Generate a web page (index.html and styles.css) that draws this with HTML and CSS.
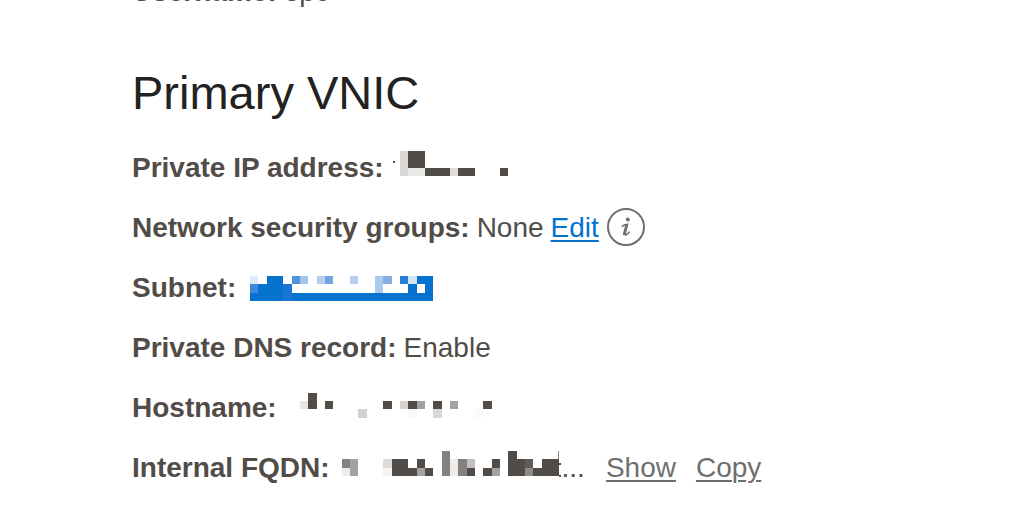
FILE: index.html
```html
<!DOCTYPE html>
<html lang="en">

<head>
  <meta charset="UTF-8">
  <title>Instance Details</title>
  <link rel="stylesheet" href="styles.css">
</head>

<body>
  <main class="details">
    <div class="row"><strong>Username:</strong> <span>opc</span></div>

    <h1>Primary VNIC</h1>

    <div class="row">
      <strong>Private IP address:</strong>
      <svg class="redacted" width="120" height="60" viewBox="391 138 120 60" aria-hidden="true">
        <path class="ink" d="M393 161h2v2h-2zM408 151h17v17h-17zM425 168h25v8h-25zM458 168h17v8h-17zM500 168h8v8h-8z" />
        <path fill="#d8d8d8" d="M400 151h8v25h-8z" />
        <path fill="#e9e9e8" d="M408 168h17v8h-17z" />
        <path fill="#dededd" d="M450 168h8v8h-8z" />
      </svg>
    </div>

    <div class="row">
      <strong>Network security groups:</strong>
      <span>None</span>
      <a href="#">Edit</a>
      <button class="info" type="button" aria-label="Information">
        <svg width="40" height="40" viewBox="0 0 40 40">
          <circle cx="20" cy="19" r="18" fill="none" stroke="#6f6f6f" stroke-width="2" />
          <circle cx="21.8" cy="11.6" r="2" fill="#6f6f6f" />
          <path d="M15.8 18.6Q18.4 16.4 21.4 16.2L18.9 24.6Q18.2 27.4 20.2 26.7Q22 26 23.6 23.6" fill="none" stroke="#6f6f6f" stroke-width="1.6" />
          <path d="M19.4 16.8L22.4 15.8L19.8 26.6L17.4 27.2Q16.6 26.4 17.2 24.4z" fill="#6f6f6f" />
        </svg>
      </button>
    </div>

    <div class="row">
      <strong>Subnet:</strong>
      <a href="#" aria-label="Subnet">
        <svg class="redacted" width="192" height="60" viewBox="243 258 192 60">
          <path fill="#0572ce" d="M267 276h16v17h-16zM417 276h16v8h-16zM258 284h25v9h-25zM408 284h9v9h-9zM425 284h8v9h-8zM250 293h183v8h-183z" />
          <path fill="#1a74d3" d="M283 284h9v17h-9z" />
          <path fill="#3f8ad8" d="M250 284h8v9h-8z" />
          <path fill="#dfebf8" d="M250 276h8v8h-8z" />
          <path fill="#5094dc" d="M292 276h8v8h-8z" />
          <path fill="#a2c5ec" d="M300 276h8v8h-8z" />
          <path fill="#b5cff0" d="M317 276h8v8h-8zM350 276h8v8h-8z" />
          <path fill="#72a5e3" d="M325 276h8v8h-8z" />
          <path fill="#abcaee" d="M375 276h8v17h-8z" />
          <path fill="#85b0e6" d="M383 276h9v8h-9z" />
          <path fill="#2a7fd6" d="M400 276h8v8h-8z" />
          <path fill="#d3e4f6" d="M408 276h9v8h-9z" />
        </svg>
      </a>
    </div>

    <div class="row"><strong>Private DNS record:</strong> <span>Enable</span></div>

    <div class="row">
      <strong>Hostname:</strong>
      <svg class="redacted" width="210" height="60" viewBox="284 378 210 60" aria-hidden="true">
        <path class="ink" d="M308 393h9v16h-9zM325 401h8v8h-8zM383 401h9v8h-9zM408 401h9v8h-9zM433 401h9v8h-9zM483 401h9v8h-9z" />
        <path fill="#e6e6e6" d="M300 401h8v8h-8z" />
        <path fill="#d2d2d2" d="M358 409h9v9h-9zM400 401h8v8h-8z" />
        <path fill="#a3a2a1" d="M417 401h8v8h-8zM450 401h8v8h-8z" />
        <path fill="#dad8d6" d="M433 409h9v9h-9z" />
        <path fill="#fafafa" d="M408 409h9v9h-9zM475 409h8v9h-8z" />
      </svg>
    </div>

    <div class="row">
      <strong>Internal FQDN:</strong>
      <span class="fqdn">
        <svg class="redacted" width="225" height="60" viewBox="337 438 225 60" aria-hidden="true">
          <path class="ink" d="M392 459h16v9h9v8h-25zM417 459h8v9h-8zM425 468h8v8h-8zM467 468h8v8h-8zM492 459h8v9h-8zM483 468h9v8h-9zM508 451h9v8h8v17h-17zM542 459h17v17h-26v-8h9zM559 463h2v2h-2zM559 475h2v2h-2z" />
          <path fill="#86807c" d="M342 459h8v9h-8zM442 451h8v25h-8zM458 459h9v17h-9z" />
          <path fill="#a3a2a1" d="M350 459h8v17h-8zM417 468h8v8h-8zM492 468h8v8h-8z" />
          <path fill="#ececec" d="M342 468h8v8h-8zM450 459h8v17h-8z" />
          <path fill="#dcdcdb" d="M383 459h9v9h-9z" />
          <path fill="#f3f3f3" d="M383 468h9v8h-9z" />
          <path fill="#bfbfbf" d="M467 459h8v9h-8z" />
          <path fill="#625b57" d="M525 459h8v9h-8z" />
          <path fill="#8e8c88" d="M525 468h8v8h-8zM558 451h1v8h-1z" />
        </svg>
        <span>...</span>
      </span>
      <div class="actions">
        <a href="#">Show</a>
        <a href="#">Copy</a>
      </div>
    </div>
  </main>
</body>

</html>
```

FILE: styles.css
```css
body {
  margin: 0;
  font-family: "Liberation Sans", Arial, sans-serif;
  font-size: 28px;
  color: #514c47;
  background-color: #fff;
  overflow: hidden;
}

.details {
  margin-top: -38px;
  padding: 0 132px;
}

h1 {
  margin: 41px 0 15px;
  font-size: 47px;
  font-weight: normal;
  line-height: 60px;
  color: #222;
}

.row {
  display: flex;
  align-items: center;
  gap: 7px;
  height: 60px;
  line-height: 60px;
  white-space: nowrap;
}

a {
  color: #0572ce;
  text-decoration: underline;
  text-decoration-thickness: 2px;
  text-underline-offset: 3px;
}

.redacted {
  display: block;
  flex: none;
}

.ink {
  fill: #514c47;
}

.info {
  display: flex;
  padding: 0;
  border: none;
  background: none;
  cursor: pointer;
}

.fqdn {
  display: flex;
}

.actions {
  display: flex;
  gap: 20px;
  margin-left: 14px;
}

.actions a {
  color: #6f6f6f;
}
```
